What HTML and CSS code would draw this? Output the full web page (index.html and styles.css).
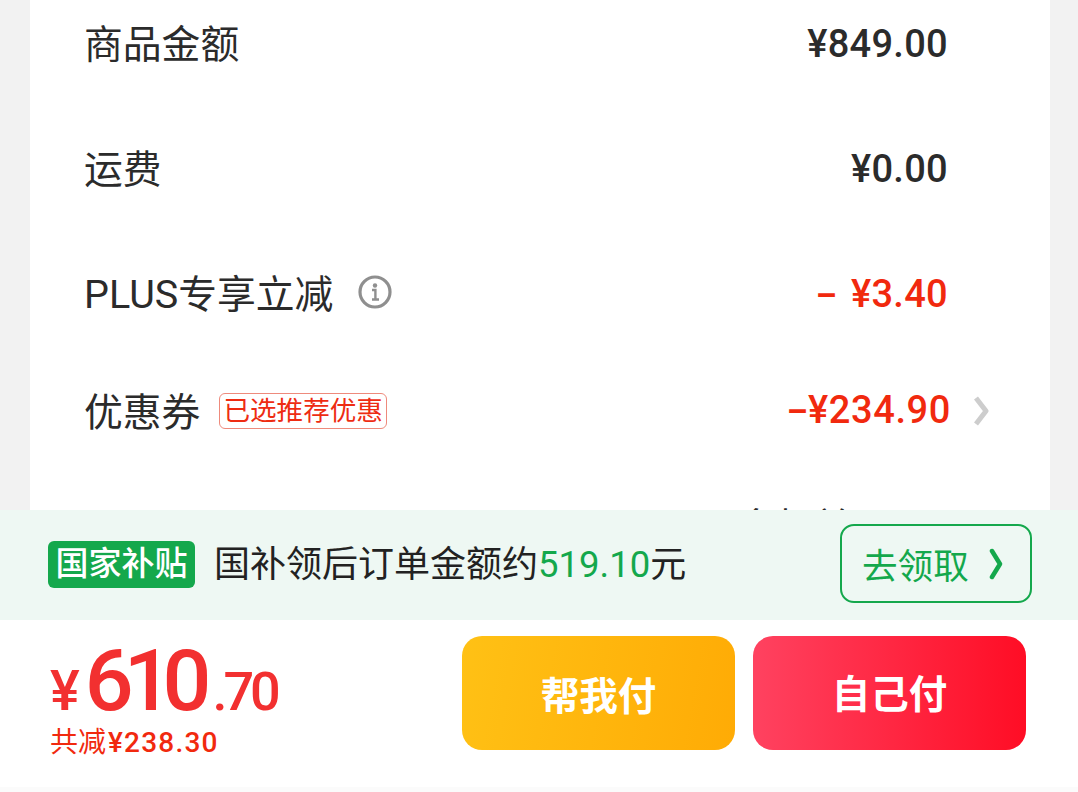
FILE: index.html
```html
<!DOCTYPE html>
<html lang="zh-CN">
<head>
    <meta charset="UTF-8">
    <meta name="viewport" content="width=device-width, initial-scale=1.0">
    <title>订单结算</title>
    <link rel="stylesheet" href="styles.css">
</head>
<body>
    <div class="page">
        <div class="content">
            <div class="card">
                <div class="row">
                    <span class="label">商品金额</span>
                    <span class="amount">¥849.00</span>
                </div>
                <div class="row">
                    <span class="label">运费</span>
                    <span class="amount">¥0.00</span>
                </div>
                <div class="row">
                    <span class="label"><span class="latin">PLUS</span>专享立减</span>
                    <svg class="info-icon" viewBox="0 0 34 34" width="34" height="34">
                        <circle cx="17" cy="17" r="15" fill="none" stroke="#8f8f8f" stroke-width="3.2"/>
                        <circle cx="17" cy="10.5" r="2.2" fill="#8f8f8f"/>
                        <path d="M14 15h3.4v9M14 24.5h7" fill="none" stroke="#8f8f8f" stroke-width="2.4"/>
                    </svg>
                    <span class="amount red minus-gap"><span class="minus">–</span><span>¥3.40</span></span>
                </div>
                <div class="row row-coupon">
                    <span class="label">优惠券</span>
                    <span class="tag">已选推荐优惠</span>
                    <span class="amount red"><span class="minus">–</span>¥234.90</span>
                    <svg class="arrow-gray" viewBox="0 0 16 32" width="16" height="32">
                        <path d="M3 3l10 13L3 29" fill="none" stroke="#cdcdcd" stroke-width="5" stroke-linejoin="round"/>
                    </svg>
                </div>
                <div class="row row-last">
                    <span class="amount-more">更多权益</span>
                </div>
            </div>
        </div>

        <div class="subsidy">
            <span class="badge">国家补贴</span>
            <span class="subsidy-text">国补领后订单金额约<em>519.10</em>元</span>
            <div class="claim">
                <span>去领取</span>
                <svg viewBox="0 0 14 32" width="14" height="32">
                    <path d="M3 3l8 13-8 13" fill="none" stroke="#14a84c" stroke-width="4.5" stroke-linecap="round" stroke-linejoin="round"/>
                </svg>
            </div>
        </div>

        <div class="footer">
            <div class="total">
                <div class="price"><span class="yen">¥</span><span class="big">610</span><span class="cents">.70</span></div>
                <div class="saved">共减<span class="saved-num">¥238.30</span></div>
            </div>
            <div class="actions">
                <button class="btn btn-yellow">帮我付</button>
                <button class="btn btn-red">自己付</button>
            </div>
        </div>
    </div>
</body>
</html>
```

FILE: styles.css
```css
* {
    box-sizing: border-box;
}
html, body {
    margin: 0;
    padding: 0;
    overflow: hidden;
}
body {
    font-family: Roboto, "Noto Sans CJK SC", sans-serif;
    color: #2b2b2b;
    background: #fff;
}
.page {
    display: flex;
    flex-direction: column;
    height: 792px;
}
.content {
    height: 510px;
    padding: 0 28px 0 30px;
    background: #f2f2f2;
    overflow: hidden;
}
.card {
    margin-top: -18px;
    padding: 0 60px 0 54px;
    background: #fff;
}
.row {
    display: flex;
    align-items: center;
    height: 125px;
}
.row-coupon {
    height: 108px;
}
.row-last {
    height: 118px;
    padding-bottom: 2px;
    justify-content: flex-end;
    padding-right: 138px;
}
.label {
    font-size: 38.8px;
    line-height: 50px;
}
.latin {
    font-size: 39.5px;
}
.amount {
    margin-left: auto;
    margin-bottom: 2px;
    padding-right: 42px;
    font-size: 38px;
    font-weight: 500;
    letter-spacing: 0.3px;
}
.amount-more {
    font-size: 38px;
}
.red {
    color: #f1290e;
}
.minus {
    font-size: 33px;
    font-weight: 700;
}
.minus-gap {
    display: flex;
    align-items: baseline;
    gap: 14px;
}
.info-icon {
    margin-left: 25px;
    margin-bottom: 6px;
}
.row-coupon .label {
    margin-top: 4px;
}
.tag {
    margin-left: 19px;
    padding: 0 3px;
    height: 36px;
    border: 1px solid #ee8a7c;
    border-radius: 6px;
    color: #ee2c12;
    font-size: 26.6px;
    line-height: 33px;
}
.row-coupon .amount {
    padding-right: 22px;
    letter-spacing: 0.6px;
}
.arrow-gray {
    margin-right: 1px;
}
.subsidy {
    display: flex;
    align-items: center;
    height: 110px;
    padding: 0 46px 0 48px;
    background: #eef8f3;
}
.badge {
    width: 147px;
    height: 47px;
    margin-top: -2px;
    border-radius: 6px;
    background: #14a84c;
    color: #fff;
    font-size: 33px;
    font-weight: 500;
    line-height: 46px;
    text-align: center;
}
.subsidy-text {
    margin-left: 19px;
    font-size: 36px;
    line-height: 50px;
    color: #222;
}
.subsidy-text em {
    font-style: normal;
    font-size: 36.5px;
    color: #14a84c;
}
.claim {
    display: flex;
    align-items: center;
    gap: 20px;
    width: 192px;
    height: 79px;
    margin-left: auto;
    margin-top: -3px;
    padding-left: 20px;
    border: 2.5px solid #14a84c;
    border-radius: 14px;
    color: #14a84c;
    font-size: 35.6px;
}
.footer {
    display: flex;
    justify-content: space-between;
    height: 172px;
    padding: 16px 52px 0 50px;
    background: #fff;
    border-bottom: 5px solid #fbfbfb;
}
.total {
    color: #f23030;
}
.price {
    display: flex;
    align-items: baseline;
    height: 70px;
    margin-top: 10px;
    font-weight: 500;
}
.yen {
    font-size: 56px;
    line-height: 40px;
}
.big {
    margin-left: 5px;
    font-size: 86px;
    line-height: 70px;
    letter-spacing: -10px;
}
.cents {
    margin-left: 11px;
    font-size: 54px;
    line-height: 40px;
    letter-spacing: -4px;
}
.saved {
    margin-top: 10px;
    font-size: 28px;
    line-height: 34px;
    color: #f1290e;
}
.saved-num {
    margin-left: 2px;
    font-weight: 500;
    letter-spacing: 1.2px;
}
.actions {
    display: flex;
    gap: 18px;
}
.btn {
    width: 273px;
    height: 114px;
    border: 0;
    border-radius: 20px;
    color: #fff;
    font-family: "Noto Sans CJK SC", sans-serif;
    font-size: 38.5px;
    font-weight: 700;
}
.btn-yellow {
    background: linear-gradient(100deg, #ffc115, #ffab05);
}
.btn-red {
    padding-bottom: 6px;
    background: linear-gradient(90deg, #ff4260, #ff0d25);
}
```
